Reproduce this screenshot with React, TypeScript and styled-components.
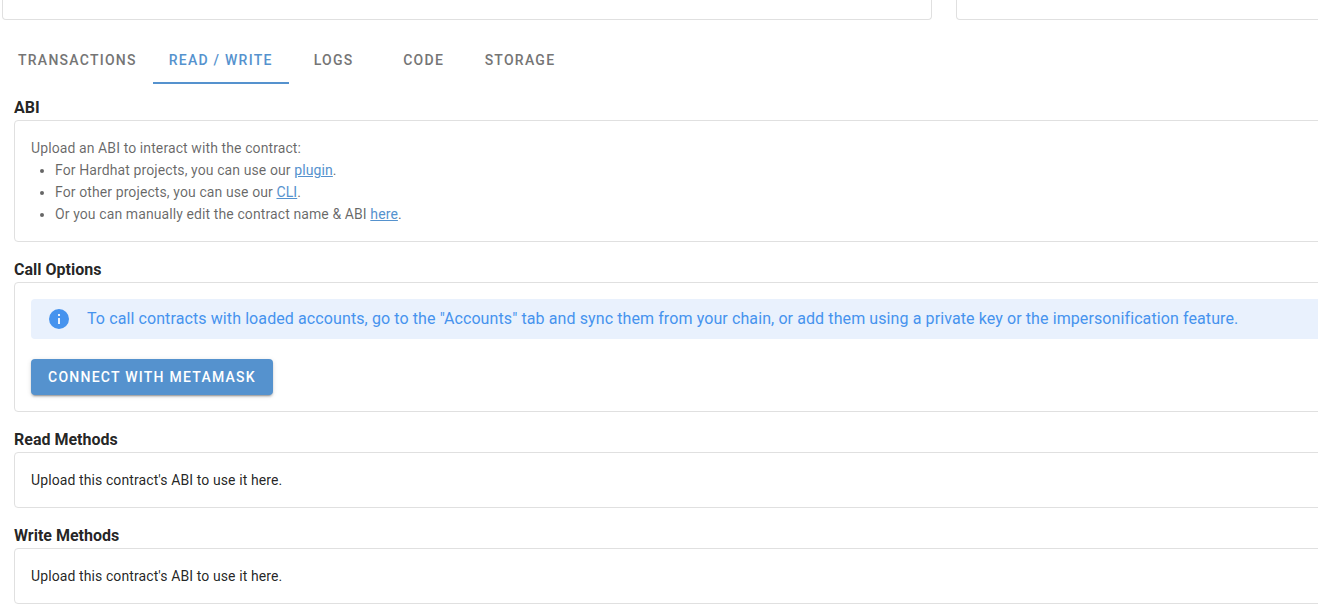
import React, { useState } from "react";
import styled, { createGlobalStyle } from "styled-components";

const GlobalStyle = createGlobalStyle`
  *, *::before, *::after { box-sizing: border-box; }
  body {
    margin: 0;
    background: #fff;
    color: rgba(0, 0, 0, 0.87);
    font-family: Roboto, "Liberation Sans", sans-serif;
    font-size: 16px;
    line-height: 24px;
  }
`;

const Page = styled.main`
  overflow-x: clip;
`;

const Content = styled.div`
  width: calc(100% + 91px);
  padding: 0 0 12px 2px;
`;

const SummaryRow = styled.div`
  display: grid;
  grid-template-columns: repeat(12, 1fr);
  column-gap: 24px;
`;

const SummaryCard = styled.div<{ $span: number }>`
  grid-column: span ${(p) => p.$span};
  height: 20px;
  border: 1px solid #e0e0e0;
  border-top: 0;
  border-radius: 0 0 4px 4px;
`;

const Tabs = styled.div`
  display: flex;
  margin-top: 16px;
`;

const Tab = styled.button<{ $active: boolean }>`
  min-width: 90px;
  height: 48px;
  padding: 2px 16px 0;
  border: 0;
  border-bottom: 2px solid ${(p) => (p.$active ? "#5592ce" : "transparent")};
  background: none;
  color: ${(p) => (p.$active ? "#5592ce" : "#757575")};
  font: 500 14px/20px Roboto, "Liberation Sans", sans-serif;
  letter-spacing: 0.0893em;
  text-transform: uppercase;
  cursor: pointer;
`;

const Sections = styled.div`
  display: flex;
  flex-direction: column;
  gap: 16px;
  padding: 12px 12px 0;
`;

const Heading = styled.h4`
  margin: 0;
  font-size: 16px;
  font-weight: 700;
  line-height: 24px;
`;

const Card = styled.div<{ $muted?: boolean }>`
  padding: 16px;
  border: 1px solid #e0e0e0;
  border-radius: 4px;
  color: ${(p) => (p.$muted ? "rgba(0, 0, 0, 0.6)" : "inherit")};
  font-size: 14px;
  line-height: 22px;
  letter-spacing: 0.0071em;
`;

const List = styled.ul`
  margin: 0;
  padding-left: 24px;
`;

const Link = styled.a`
  color: #5592ce;
`;

const Alert = styled.div`
  display: flex;
  gap: 16px;
  padding: 8px 16px;
  margin-bottom: 20px;
  border-radius: 4px;
  background: #e9f1fd;
  color: #4693ee;
  font-size: 16px;
  line-height: 24px;
`;

const AlertIcon = styled.svg`
  width: 24px;
  height: 24px;
  flex: none;
  fill: currentColor;
`;

const PrimaryButton = styled.button`
  display: block;
  height: 36px;
  padding: 0 17px;
  border: 0;
  border-radius: 4px;
  background: #5592ce;
  color: #fff;
  font: 500 14px/20px Roboto, "Liberation Sans", sans-serif;
  letter-spacing: 0.0893em;
  text-transform: uppercase;
  box-shadow: 0 3px 1px -2px rgba(0, 0, 0, 0.2), 0 2px 2px 0 rgba(0, 0, 0, 0.14),
    0 1px 5px 0 rgba(0, 0, 0, 0.12);
  cursor: pointer;
`;

const tabs = ["Transactions", "Read / Write", "Logs", "Code", "Storage"];

export default function App() {
  const [active, setActive] = useState("Read / Write");

  return (
    <Page>
      <GlobalStyle />
      <Content>
        <SummaryRow>
          <SummaryCard $span={8} />
          <SummaryCard $span={4} />
        </SummaryRow>
        <Tabs role="tablist">
          {tabs.map((tab) => (
            <Tab
              key={tab}
              type="button"
              role="tab"
              aria-selected={tab === active}
              $active={tab === active}
              onClick={() => setActive(tab)}
            >
              {tab}
            </Tab>
          ))}
        </Tabs>
        <Sections>
          <section>
            <Heading>ABI</Heading>
            <Card $muted>
              Upload an ABI to interact with the contract:
              <List>
                <li>
                  For Hardhat projects, you can use our <Link href="#plugin">plugin</Link>.
                </li>
                <li>
                  For other projects, you can use our <Link href="#cli">CLI</Link>.
                </li>
                <li>
                  Or you can manually edit the contract name &amp; ABI <Link href="#edit">here</Link>.
                </li>
              </List>
            </Card>
          </section>
          <section>
            <Heading>Call Options</Heading>
            <Card>
              <Alert role="note">
                <AlertIcon viewBox="0 0 24 24" aria-hidden="true">
                  <path d="M13,9H11V7H13M13,17H11V11H13M12,2A10,10 0 0,0 2,12A10,10 0 0,0 12,22A10,10 0 0,0 22,12A10,10 0 0,0 12,2Z" />
                </AlertIcon>
                <span>
                  To call contracts with loaded accounts, go to the "Accounts" tab and sync them from your
                  chain, or add them using a private key or the impersonification feature.
                </span>
              </Alert>
              <PrimaryButton type="button">Connect with Metamask</PrimaryButton>
            </Card>
          </section>
          <section>
            <Heading>Read Methods</Heading>
            <Card>Upload this contract's ABI to use it here.</Card>
          </section>
          <section>
            <Heading>Write Methods</Heading>
            <Card>Upload this contract's ABI to use it here.</Card>
          </section>
        </Sections>
      </Content>
    </Page>
  );
}
